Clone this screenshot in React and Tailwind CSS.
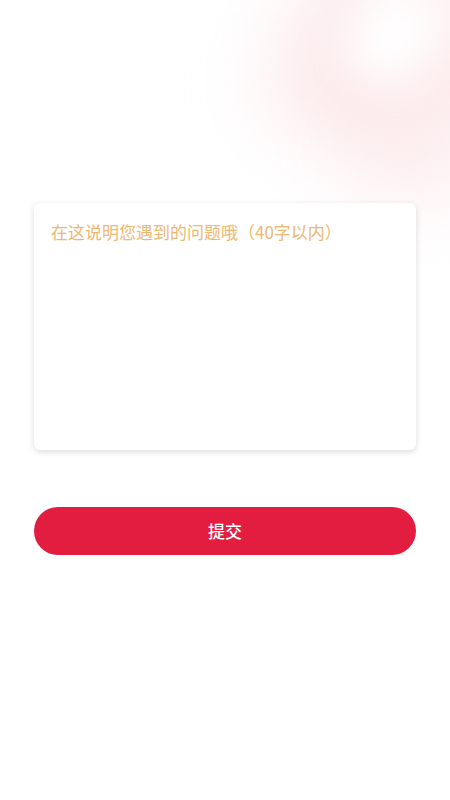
import { useState } from "react";

const App = () => {
  const [text, setText] = useState("");

  return (
    <div
      className="relative min-h-screen w-full overflow-hidden bg-white"
      style={{ fontFamily: '"Noto Sans CJK SC", "Noto Sans", sans-serif' }}
    >
      {/* soft pink decoration in the top right */}
      <div className="pointer-events-none absolute -top-10 right-[-40px] h-[200px] w-[200px] rounded-[40px] rotate-[30deg] bg-[#fbe0e4] blur-2xl opacity-80" />
      <div className="pointer-events-none absolute top-[-20px] right-[10px] h-[110px] w-[90px] rounded-[30px] rotate-[35deg] bg-white blur-xl" />
      <div className="pointer-events-none absolute top-[110px] right-[-30px] h-[90px] w-[120px] rounded-full bg-[#fdeef0] blur-2xl opacity-70" />

      <div className="relative px-[34px] pt-[203px]">
        <div className="h-[247px] rounded-md bg-white shadow-[0_2px_6px_rgba(0,0,0,0.14)]">
          <textarea
            value={text}
            maxLength={40}
            onChange={(e) => setText(e.target.value)}
            placeholder="在这说明您遇到的问题哦（40字以内）"
            className="h-full w-full resize-none bg-transparent px-[17px] pt-[17px] text-[17px] leading-[24px] text-gray-700 outline-none placeholder:text-[#ecb872]"
          />
        </div>

        <button className="mt-[57px] flex h-[48px] w-full items-center justify-center rounded-full bg-[#e31d40] text-[17px] font-medium text-white">
          提交
        </button>
      </div>
    </div>
  );
};

export default App;
